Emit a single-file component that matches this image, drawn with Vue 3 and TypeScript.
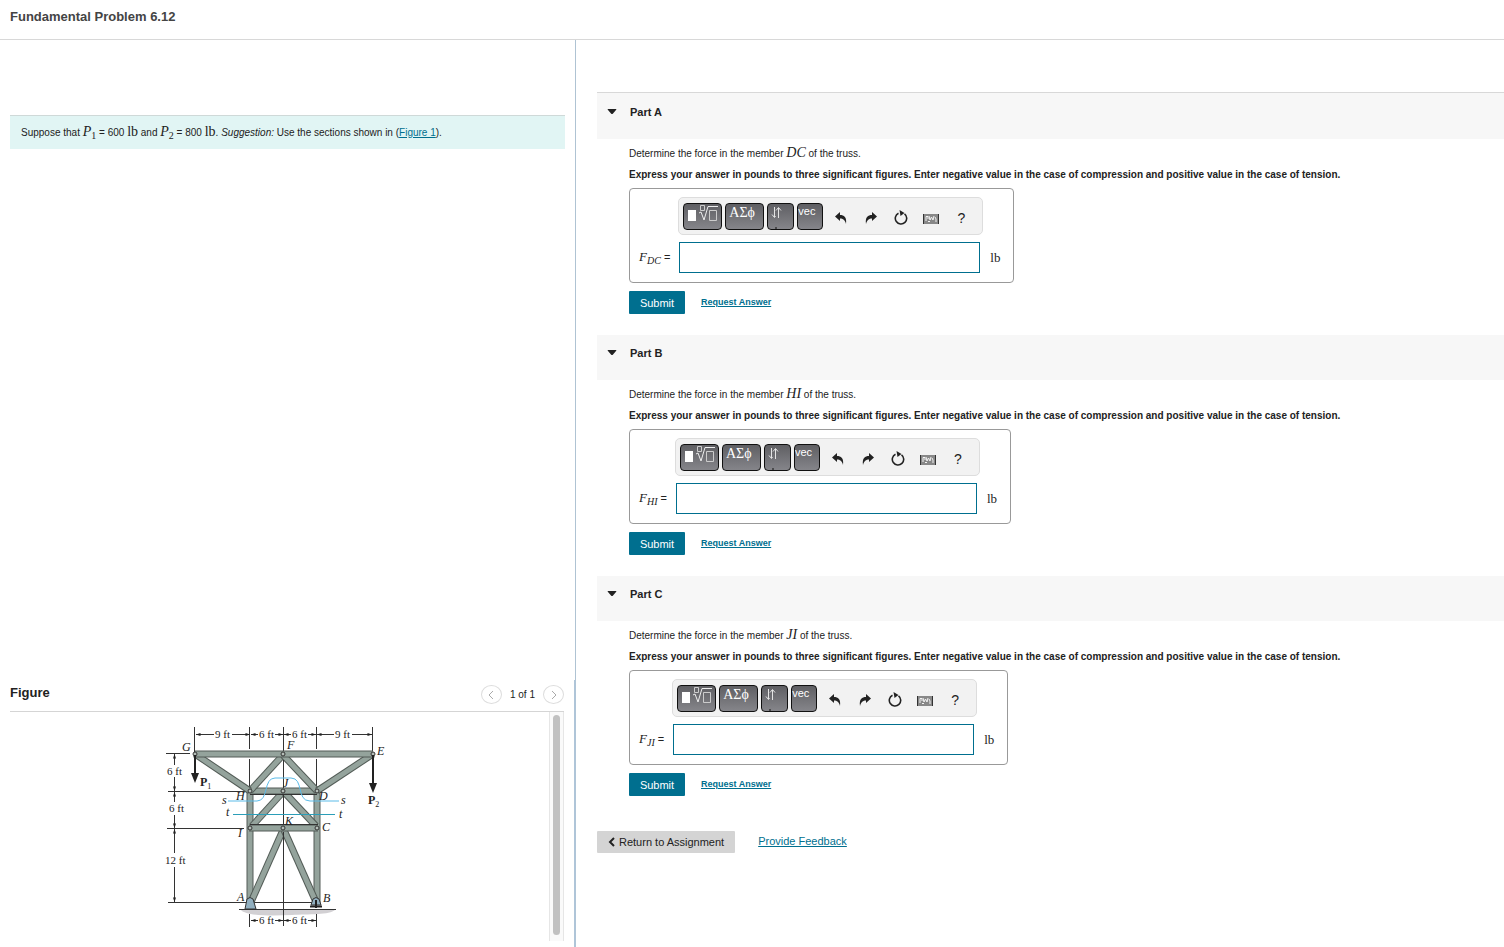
<script setup lang="ts">
import { ref } from 'vue'

interface Part {
  id: string
  title: string
  member: string
}

const parts: Part[] = [
  { id: 'a', title: 'Part A', member: 'DC' },
  { id: 'b', title: 'Part B', member: 'HI' },
  { id: 'c', title: 'Part C', member: 'JI' },
]

const answers = ref<Record<string, string>>({ a: '', b: '', c: '' })

const members: string[] = [
  'M250 828V903',
  'M317 828V903',
  'M283 830L251 902',
  'M284 830L316 902',
  'M250 791V828',
  'M317 791V828',
  'M283 792L252 826',
  'M284 792L316 826',
  'M249 828H318',
  'M250 791H317',
  'M283 755L250 791',
  'M283 755L317 791',
  'M195 754L250 791',
  'M373 754L317 791',
  'M195 754H373',
]

const joints: [number, number][] = [
  [195, 754], [283, 754], [373, 754],
  [250, 791], [283, 791], [317, 791],
  [250, 828], [283, 828], [317, 828],
]

const pointLabels: [string, number, number][] = [
  ['G', 182, 751], ['F', 287, 749], ['E', 377, 755],
  ['H', 236, 800], ['J', 283, 787], ['D', 319, 800],
  ['I', 238, 837], ['K', 285, 825], ['C', 322, 831],
  ['A', 237, 901], ['B', 323, 902], ['s', 222, 804],
  ['t', 226, 816], ['s', 341, 804], ['t', 339, 818],
]

const dimensionLabels: [string, number, number][] = [
  ['9 ft', 215, 738], ['6 ft', 259, 738], ['6 ft', 292, 738], ['9 ft', 335, 738],
  ['6 ft', 167, 775], ['6 ft', 169, 812], ['12 ft', 165, 864],
  ['6 ft', 259, 924], ['6 ft', 292, 924],
]
</script>

<template>
  <div class="page">
    <header class="page-header">
      <h1>Fundamental Problem 6.12</h1>
    </header>

    <div class="columns">
      <section class="left">
        <div class="prompt-area">
          <p class="prompt">
            Suppose that <i class="math">P</i><sub class="math">1</sub> = 600 <span class="math">lb</span> and
            <i class="math">P</i><sub class="math">2</sub> = 800 <span class="math">lb</span>. <em>Suggestion:</em>
            Use the sections shown in (<a href="#figure">Figure 1</a>).
          </p>
        </div>

        <div id="figure" class="figure">
          <div class="figure-head">
            <h2>Figure</h2>
            <div class="pager">
              <button type="button" aria-label="Previous figure">
                <svg width="8" height="10" viewBox="0 0 8 10"><path d="M6 1L2 5L6 9" /></svg>
              </button>
              <span>1 of 1</span>
              <button type="button" aria-label="Next figure">
                <svg width="8" height="10" viewBox="0 0 8 10"><path d="M2 1L6 5L2 9" /></svg>
              </button>
            </div>
          </div>
          <div class="figure-body">
            <div class="figure-canvas">
              <svg class="truss" width="240" height="212" viewBox="160 720 240 212">
                <defs>
                  <marker id="tip" viewBox="0 0 6 4" markerWidth="5" markerHeight="3" refX="6" refY="2" orient="auto-start-reverse">
                    <path d="M0 0L6 2L0 4Z" fill="#222" />
                  </marker>
                </defs>
                <path class="soil" d="M241 910H335C330 915 308 914 292 915C272 916 246 916 241 910Z" />
                <g class="thin">
                  <path d="M194.500 727V754M249.500 727V749M249.500 759V791M283.500 727V926M316.500 727V749M316.500 759V791M372.500 727V754" />
                  <path d="M166 753.500H190M168 791.500H250M167 828.500H244M168 902.500H316" />
                  <path d="M249.500 914V927M316.500 914V927" />
                  <path class="ground" d="M239 909.500H336" />
                </g>
                <g v-for="d in members" :key="d">
                  <path :d="d" class="bar-edge" />
                  <path :d="d" class="bar" />
                </g>
                <path class="center" d="M283.500 760V788M283.500 794V824M283.500 832V910M250 794.500H317M250 824.500H318" />
                <circle v-for="(j, n) in joints" :key="n" :cx="j[0]" :cy="j[1]" r="2" class="joint" />
                <path class="support" d="M247 899Q250 896 253 899L256 909H245Z" />
                <path class="support" d="M313 899Q316 896 319 899L321 905H311Z" />
                <path d="M310 906.500H322M316 900V908" class="roller" />
                <g class="arrows">
                  <path d="M214 734.500H196" /><path d="M232 734.500H250" />
                  <path d="M258 734.500H251" /><path d="M275 734.500H283" />
                  <path d="M291 734.500H284" /><path d="M308 734.500H316" />
                  <path d="M334 734.500H317" /><path d="M352 734.500H372" />
                  <path d="M174.500 765V754" /><path d="M174.500 777V791" />
                  <path d="M174.500 802V792" /><path d="M174.500 815V828" />
                  <path d="M174.500 853V829" /><path d="M174.500 867V902" />
                  <path d="M258 920.500H251" /><path d="M275 920.500H283" />
                  <path d="M291 920.500H284" /><path d="M308 920.500H316" />
                </g>
                <path class="load" d="M195 755V776M373 755V786" />
                <path d="M191 773H199L195 783ZM369 783H377L373 793Z" fill="#222" />
                <path class="cut" d="M228 801H257C269 801 263 778 275 778H291C304 778 296 801 310 801H339" />
                <path class="cut teal" d="M233 814.500H335" />
                <text v-for="(l, n) in pointLabels" :key="'p' + n" :x="l[1]" :y="l[2]" class="point">{{ l[0] }}</text>
                <text v-for="(l, n) in dimensionLabels" :key="'d' + n" :x="l[1]" :y="l[2]" class="dim">{{ l[0] }}</text>
                <text x="200" y="786" class="force">P<tspan class="force-sub" dy="3">1</tspan></text>
                <text x="368" y="804" class="force">P<tspan class="force-sub" dy="3">2</tspan></text>
              </svg>
            </div>
            <div class="track"><div class="thumb"></div></div>
          </div>
        </div>
      </section>

      <main class="right">
        <section v-for="part in parts" :key="part.id" class="part">
          <h2 class="part-head">
            <svg width="10" height="6" viewBox="0 0 10 6"><path d="M1 0H9Q10 0 9 1L6 4.500Q5 5.500 4 4.500L1 1Q0 0 1 0Z" fill="#222" /></svg>
            {{ part.title }}
          </h2>
          <form class="part-body" @submit.prevent>
            <p class="question">
              Determine the force in the member <i class="math member">{{ part.member }}</i> of the truss.
            </p>
            <p class="instruction">
              Express your answer in pounds to three significant figures. Enter negative value in the case of
              compression and positive value in the case of tension.
            </p>
            <div class="answer">
              <div class="toolbar">
                <button type="button" class="key wide" aria-label="Templates">
                  <svg width="37" height="25" viewBox="0 0 37 25">
                    <path d="M4 6H12V17H4Z" fill="#fff" />
                    <path d="M15 9L17 8L20 16L24 2.500H34" fill="none" stroke="#eee" />
                    <path d="M16.500 1.500H20.500V6.500H16.500ZM25.500 6.500H32.500V16.500H25.500Z" fill="none" stroke="#ccc" />
                  </svg>
                </button>
                <button type="button" class="key wide greek">ΑΣϕ</button>
                <button type="button" class="key arrows-key" aria-label="Arrows">
                  <svg width="25" height="25" viewBox="0 0 25 25">
                    <path d="M6.500 3V13M4 10.500L6.500 13.500L7.500 12M10.500 14V4M8 6.500L10.500 3.500L13 6.500" fill="none" stroke="#e4e4e4" />
                    <path d="M7 24H9" stroke="#111" />
                  </svg>
                </button>
                <button type="button" class="key vec">vec</button>
                <span class="tools">
                  <button type="button" aria-label="Undo">
                    <svg width="12" height="12" viewBox="0 0 12 12"><path d="M0 4.500L5 0V3C9 3 12 5 11 12C10 8 8 6.500 5 6.500V9Z" fill="#222" /></svg>
                  </button>
                  <button type="button" aria-label="Redo">
                    <svg width="12" height="12" viewBox="0 0 12 12"><path d="M12 4.500L7 0V3C3 3 0 5 1 12C2 8 4 6.500 7 6.500V9Z" fill="#222" /></svg>
                  </button>
                  <button type="button" aria-label="Reset">
                    <svg width="14" height="15" viewBox="0 0 14 15">
                      <path d="M10.500 3.800A5.700 5.700 0 1 1 4.500 3.200" fill="none" stroke="#222" stroke-width="1.600" />
                      <path d="M5.500 0L10.500 3L6.500 6Z" fill="#222" />
                    </svg>
                  </button>
                  <button type="button" aria-label="Keyboard" class="keyboard">
                    <svg width="16" height="10" viewBox="0 0 16 10">
                      <path d="M1 0H15V10H1Z" fill="#888" />
                      <path d="M.500 0V10M15.500 0V10" stroke="#333" />
                      <path d="M3 2.500V7M3 2.500H5V5M6 2L7 6L8.500 3L10 6L11 2M12 3L13 5V8M5 7.500H7" fill="none" stroke="#f4f4f4" />
                    </svg>
                  </button>
                  <button type="button" aria-label="Help" class="help">?</button>
                </span>
              </div>
              <label :for="'answer-' + part.id"><i class="math">F</i><sub class="math"><i>{{ part.member }}</i></sub> =</label>
              <input :id="'answer-' + part.id" v-model="answers[part.id]" type="text" autocomplete="off" />
              <span class="unit math">lb</span>
            </div>
            <div class="actions">
              <button type="submit" class="submit">Submit</button>
              <a href="#request">Request Answer</a>
            </div>
          </form>
        </section>
        <footer class="footer">
          <button type="button" class="return">
            <svg width="8" height="10" viewBox="0 0 8 10"><path d="M6 1L2 5L6 9" fill="none" stroke="#222" stroke-width="2" /></svg>
            Return to Assignment
          </button>
          <a href="#feedback">Provide Feedback</a>
        </footer>
      </main>
    </div>
  </div>
</template>

<style>
body {
  margin: 0;
  background: #fff;
}
</style>

<style scoped>
.page {
  display: flex;
  flex-direction: column;
  min-height: 100vh;
  color: #222;
  font: 11px/16px "Liberation Sans", Arial, sans-serif;
}
.page * {
  box-sizing: border-box;
}
h1, h2, p {
  margin: 0;
}
button {
  padding: 0;
  font-family: inherit;
  cursor: pointer;
}
a {
  color: #006f8f;
}
.math {
  font-family: "Liberation Serif", "Times New Roman", serif;
  font-size: 13px;
  line-height: 1;
}
sub {
  vertical-align: -3px;
}
.prompt .math, .question .math {
  font-size: 14px;
}
sub.math, .prompt sub.math {
  font-size: 10px;
}
.page-header {
  height: 40px;
  padding: 8px 10px;
  border-bottom: 1px solid #d8d8d8;
}
h1 {
  color: #444;
  font-size: 13px;
  line-height: 17px;
}
.columns {
  flex: 1;
  display: grid;
  grid-template-columns: minmax(0, 576fr) minmax(0, 928fr);
}
.left {
  display: flex;
  flex-direction: column;
}
.prompt-area {
  flex: 1;
  padding: 75px 10px 0;
  border-right: 1px solid #afc3d3;
}
.prompt {
  padding: 9px 11px 8px;
  border-top: 1px solid #cfd9d8;
  background: #e1f5f4;
  font-size: 10px;
}
.figure {
  padding: 0 10px 6px;
  border-right: 2px solid #afc5d8;
}
.figure-head {
  display: flex;
  align-items: flex-start;
  justify-content: space-between;
  height: 32px;
  padding-top: 4px;
  border-bottom: 1px solid #d5d5d5;
}
.figure-head h2 {
  font-size: 13px;
  line-height: 17px;
}
.pager {
  display: flex;
  align-items: center;
  gap: 8px;
  height: 21px;
  font-size: 10px;
}
.pager button {
  display: grid;
  place-items: center;
  width: 21px;
  height: 19px;
  border: 1px solid #ddd;
  border-radius: 50%;
  background: #fff;
}
.pager path {
  fill: none;
  stroke: #aaa;
}
.figure-body {
  display: flex;
  height: 229px;
}
.figure-canvas {
  flex: 1;
  padding-top: 8px;
  text-align: center;
}
.track {
  width: 15px;
  padding: 3px;
  border: solid #e6e6e6;
  border-width: 0 1px;
  background: #fafafa;
}
.thumb {
  height: 220px;
  border-radius: 4px;
  background: #c1c1c1;
}
.thin path, .arrows path, .center {
  fill: none;
  stroke: #333;
  stroke-width: 1;
}
.arrows path {
  marker-end: url(#tip);
}
.soil {
  fill: #d2d0d3;
}
.bar-edge {
  stroke: #525b56;
  stroke-width: 7;
}
.bar {
  stroke: #94a39c;
  stroke-width: 5;
}
.joint {
  fill: #b4beb8;
  stroke: #333;
}
.support {
  fill: #91afbf;
  stroke: #333;
}
.roller, .load {
  fill: none;
  stroke: #222;
  stroke-width: 2;
}
.cut {
  fill: none;
  stroke: #5abbe8;
  stroke-width: 1;
}
.teal {
  stroke: #2b9eb8;
}
.truss text {
  fill: #222;
  font-family: "Liberation Serif", "Times New Roman", serif;
  font-size: 11px;
}
.truss .point {
  font-size: 12px;
  font-style: italic;
}
.truss .force {
  font-size: 12px;
  font-weight: bold;
}
.truss .force-sub {
  font-size: 8px;
  font-weight: normal;
}
.right {
  padding: 52px 0 0 21px;
}
.part-head {
  display: flex;
  align-items: center;
  gap: 13px;
  height: 45px;
  padding: 0 10px 9px;
  background: #f7f7f7;
  font-size: 11px;
  line-height: 16px;
}
.part:first-child .part-head {
  height: 47px;
  border-top: 1px solid #d8d8d8;
}
.part-body {
  padding: 4px 0 21px 32px;
}
.question, .instruction {
  font-size: 10px;
  line-height: 21px;
}
.instruction {
  font-weight: bold;
}
.answer {
  display: inline-grid;
  grid-template-columns: auto 305px auto;
  grid-template-rows: 38px 31px;
  row-gap: 7px;
  align-items: center;
  margin-top: 3px;
  padding: 8px 13px 9px 9px;
  border: 1px solid #999;
  border-radius: 4px;
  vertical-align: top;
}
.toolbar {
  grid-column: 2;
  display: flex;
  gap: 3px;
  height: 38px;
  padding: 5px 4px;
  border: 1px solid #ddd;
  border-radius: 5px;
  background: #f2f2f2;
}
.key {
  display: flex;
  align-items: flex-start;
  width: 26px;
  height: 27px;
  overflow: hidden;
  border: 1px solid #111;
  border-radius: 4px;
  background: linear-gradient(#5f5f63, #85858a);
  color: #fff;
}
.wide {
  width: 39px;
}
.arrows-key {
  width: 27px;
}
.greek {
  padding-left: 3px;
  font-family: "Liberation Serif", "Times New Roman", serif;
  font-size: 14px;
  line-height: 17px;
}
.vec {
  font-size: 11px;
  line-height: 14px;
}
.tools {
  display: flex;
}
.tools button {
  display: grid;
  place-items: center;
  width: 30px;
  height: 29px;
  border: 0;
  background: none;
  color: #222;
}
.tools .keyboard {
  padding-top: 3px;
}
.tools .help {
  font-size: 14px;
}
.answer label {
  grid-column: 1;
  padding-right: 8px;
  white-space: nowrap;
}
.answer input {
  width: 301px;
  height: 31px;
  margin-left: 1px;
  border: 1px solid #006f8f;
  border-radius: 0;
  background: #fff;
  outline: 0;
}
.unit {
  padding-left: 7px;
}
.actions {
  display: flex;
  gap: 16px;
  margin-top: 8px;
}
.submit {
  width: 56px;
  height: 23px;
  border: 0;
  border-radius: 1px;
  background: #006f8f;
  color: #fff;
  font-size: 11px;
}
.actions a {
  font-size: 9px;
  font-weight: bold;
  line-height: 22px;
}
.footer {
  display: flex;
  gap: 23px;
  padding-top: 14px;
}
.return {
  display: flex;
  align-items: center;
  gap: 3px;
  height: 22px;
  padding: 0 11px;
  border: 0;
  border-radius: 1px;
  background: #d4d4d4;
  color: #222;
  font-size: 11px;
}
.footer a {
  line-height: 20px;
}
</style>
